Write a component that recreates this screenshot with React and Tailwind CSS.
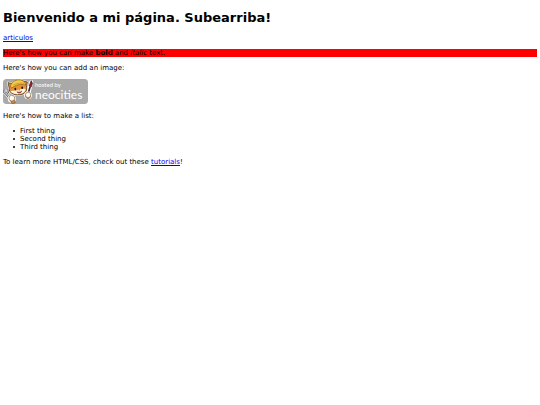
import React from 'react'

const things = ['First thing', 'Second thing', 'Third thing']

const NeocitiesLogo = () => {
  return (
    <svg viewBox="0 0 85 25" className="block w-[85px] h-[25px]" role="img" aria-label="hosted by neocities">
      <rect width="85" height="25" rx="3.5" fill="#a9a9a9" />

      {/* Wrench */}
      <path d="M1.2 10.5v2.8l2 1.4 4 4.6M4.8 10.2l.2 3-1.8 1.5" fill="none" stroke="#fff" strokeWidth="3.4" strokeLinejoin="round" />
      <path d="M1.2 10.5v2.8l2 1.4 4 4.6M4.8 10.2l.2 3-1.8 1.5" fill="none" stroke="#4b4d50" strokeWidth="2.2" />
      <path d="M1.2 10.8v2.4l2 1.4 4 4.6M4.8 10.5l.1 2.5-1.7 1.7" fill="none" stroke="#c5c9cc" strokeWidth="1.1" />

      {/* Paint brush */}
      <path d="M25.2 15 28.2 3" stroke="#fff" strokeWidth="4" strokeLinecap="round" />
      <path d="M25 15 27.2 7.5" stroke="#29201c" strokeWidth="1.6" />
      <path d="M26.2 7 28.2 1.6 29.4 4.3 28.2 8Z" fill="#a8192c" stroke="#4a1820" strokeWidth="0.7" />

      {/* Cat head */}
      <path d="M5 3.7 9 4.5C12 1 18 .7 20.3 2.2l4 .7-.8 5.5c.8 4-2 7-7 7.4C10 16.3 5.8 13.6 6.3 9.3Z" fill="#fff" stroke="#fff" strokeWidth="2" strokeLinejoin="round" />
      <path d="M5 3.7 9 4.5C12 1 18 .7 20.3 2.2l4 .7-.8 5.5c.8 4-2 7-7 7.4C10 16.3 5.8 13.6 6.3 9.3Z" fill="#e8903a" stroke="#4b2c14" strokeWidth="0.8" />
      <path d="M7.5 12.5c2-1.3 4 0 6.5-1.2 2.6-1 5.5-2 8.6-1.2-.3 3-2.7 4.7-6.1 5-3.6.3-7-.4-9-2.6Z" fill="#fff3df" />

      {/* Hard hat */}
      <path d="M7.6 7.3C8.3 3 12 .8 16 .8c4.2 0 6.4 2.4 6.6 5.3-5-1.4-9.7-.3-14 3Z" fill="#f5cc45" stroke="#8b621f" strokeWidth="0.7" />
      <path d="M10.2 6.3c2.6-1.9 6.8-2.7 10.8-2" stroke="#c39328" strokeWidth="0.8" fill="none" />

      {/* Face */}
      <ellipse cx="12.3" cy="10" rx="0.9" ry="1.2" fill="#24170e" />
      <ellipse cx="19.2" cy="8.8" rx="0.9" ry="1.2" fill="#24170e" />
      <path d="M15.3 11l1.8-.4-.7 1Z" fill="#61271e" />
      <path d="M14 12.7c1.6.9 3.6.6 4.6-.7-.2 2.4-3.6 2.9-4.6.7Z" fill="#c64635" stroke="#41200f" strokeWidth="0.5" />

      {/* Paws */}
      <circle cx="8.8" cy="19.7" r="4" fill="#fff" />
      <path d="M7 20.5c1.3 1.2 3.2 1.2 4.2.2l1 3.3-3.4.4Z" fill="#d88a34" stroke="#6b4a2b" strokeWidth="0.6" />
      <circle cx="8.8" cy="19.1" r="2.9" fill="#fffaf0" stroke="#8b6b4a" strokeWidth="0.7" />
      <circle cx="25" cy="16.3" r="3.9" fill="#fff" />
      <path d="M22.4 16.5c0 4 5 4 5.3.4Z" fill="#d88a34" stroke="#6b4a2b" strokeWidth="0.6" />
      <circle cx="25.1" cy="15.9" r="2.7" fill="#fffaf0" stroke="#8b6b4a" strokeWidth="0.7" />

      <text x="32" y="8" fontSize="6" fill="#fff" fontFamily="Lato, sans-serif">hosted by</text>
      <text x="32" y="20" fontSize="12" fill="#fff" fontFamily="Lato, sans-serif">neocities</text>
    </svg>
  )
}

const App = () => {
  return (
    <div className="min-h-screen bg-white px-[3px] pt-[10px] font-['DejaVu_Sans',sans-serif] text-[7px] leading-[8px] text-black">
      <h1 className="mb-[8px] text-[13px] leading-[16px] font-bold">Bienvenido a mi página. Subearriba!</h1>

      <div className="flex flex-col gap-[7px]">
        <p>
          <a href="#articulos" className="text-[#0000ee] underline">articulos</a>
        </p>

        <p className="bg-[#ff0000]">
          Here's how you can make <strong>bold</strong> and <em>italic</em> text.
        </p>

        <p>Here's how you can add an image:</p>

        <a href="#neocities" className="block self-start pb-px">
          <NeocitiesLogo />
        </a>

        <p>Here's how to make a list:</p>

        <ul className="pl-[10px]">
          {things.map((thing) => (
            <li key={thing} className="flex items-center gap-[5px] before:size-[2px] before:rounded-full before:bg-black">
              {thing}
            </li>
          ))}
        </ul>

        <p>
          To learn more HTML/CSS, check out these <a href="#tutorials" className="text-[#0000ee] underline">tutorials</a>!
        </p>
      </div>
    </div>
  )
}

export default App
